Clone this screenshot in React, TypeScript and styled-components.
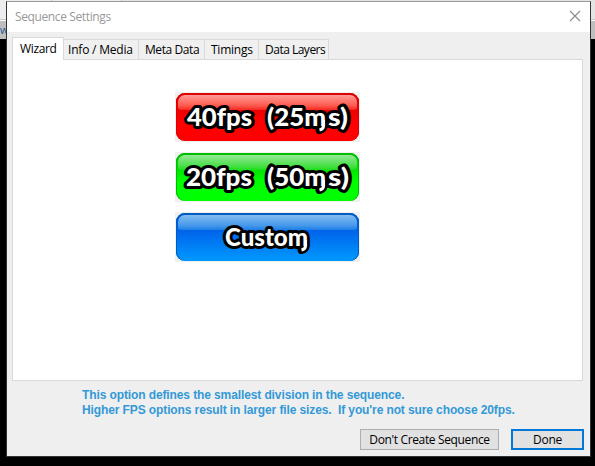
import React from "react";
import styled, { createGlobalStyle } from "styled-components";

const PageStyle = createGlobalStyle`
  *, *::before, *::after { box-sizing: border-box; }
  html, body, #root { height: 100%; margin: 0; }
  body { background: #000; overflow: hidden; }
`;

const uiFont = `"Open Sans", "Noto Sans", sans-serif`;

const Desktop = styled.div`
  display: grid;
  width: 595px;
  height: 466px;
  overflow: hidden;
  background: #000;
`;

const Backdrop = styled.div`
  grid-area: 1 / 1;
  height: 39px;
  display: flex;
  flex-direction: column;
  background: #c4c4c4;
`;

const BackdropTop = styled.div`
  display: flex;
  height: 20px;
  background: #e4e4e4;
  border-bottom: 1px solid #c8c8c8;
`;

const BackdropTab = styled.div<{ $width: number }>`
  width: ${(p) => p.$width}px;
  border-right: 1px solid #c6c6c6;
  background: #ededed;
`;

const BackdropRow = styled.div`
  flex: 1;
  font: 11px/17px ${uiFont};
  color: #1c5a8c;
  background: #bebebe;
  border-top: 1px solid #fafafa;
`;

const Dialog = styled.section`
  grid-area: 1 / 1;
  z-index: 1;
  margin: 1px 0 0 6px;
  width: 585px;
  height: 456px;
  display: flex;
  flex-direction: column;
  background: #efefef;
  border: 1px solid #333;
  border-top-color: #999;
  font-family: ${uiFont};
  font-size: 12px;
  color: #000;
`;

const TitleBar = styled.header`
  display: flex;
  justify-content: space-between;
  height: 30px;
  padding: 0 9px 0 8px;
  background: #fff;
  color: #999;
  line-height: 30px;
`;

const Close = styled.button`
  display: flex;
  align-items: center;
  padding: 0 0 2px;
  border: 0;
  background: none;
  color: #8b8b8b;
`;

const Tracked = styled.span<{ $spacing: number }>`
  letter-spacing: ${(p) => p.$spacing}px;
  white-space: pre;
`;

const TabStrip = styled.nav`
  display: flex;
  align-items: flex-end;
  height: 27px;
  padding-left: 5px;
`;

const Tab = styled.button<{ $width: number; $indent: number; $active?: boolean }>`
  width: ${(p) => p.$width}px;
  height: ${(p) => (p.$active ? 23 : 20)}px;
  padding: 0 0 0 ${(p) => p.$indent}px;
  border: 1px solid #d9d9d9;
  border-bottom: 0;
  border-left-width: ${(p) => (p.$active ? 1 : 0)}px;
  margin-bottom: ${(p) => (p.$active ? -1 : 0)}px;
  z-index: ${(p) => (p.$active ? 1 : 0)};
  background: ${(p) => (p.$active ? "#fff" : "#f0f0f0")};
  color: #000;
  font: inherit;
  line-height: ${(p) => (p.$active ? 18 : 19)}px;
  text-align: left;
  white-space: nowrap;
`;

const Panel = styled.main`
  width: 571px;
  height: 322px;
  margin-left: 5px;
  padding: 32px 0 0 162px;
  display: flex;
  flex-direction: column;
  gap: 10px;
  background: #fff;
  border: 1px solid #d9d9d9;
`;

type Tone = "red" | "green" | "blue";

const fills: Record<Tone, { rim: string; gloss: string; body: string }> = {
  red: {
    rim: "#dc0000",
    gloss: "linear-gradient(#ff9c94, #ff5a50 70%, #f5281f)",
    body: "linear-gradient(#e90000 30%, #ff0000 60%)",
  },
  green: {
    rim: "#00bd00",
    gloss: "linear-gradient(#96e996, #4be04b 70%, #1ddd1d)",
    body: "linear-gradient(#00d800 25%, #00ff00 60%)",
  },
  blue: {
    rim: "#005cc0",
    gloss: "linear-gradient(#82bdf0, #4698ea 70%, #1c7ee6)",
    body: "linear-gradient(#005ee8 30%, #0099ff)",
  },
};

const RateButton = styled.button`
  width: 185px;
  height: 50px;
  padding: 1px;
  border: 0;
  background: #f0f0f0;
`;

const RateFace = styled.span<{ $tone: Tone }>`
  display: grid;
  height: 48px;
  overflow: hidden;
  border-radius: 9px;
  background: ${(p) => fills[p.$tone].body};
  box-shadow: inset 0 2px 0 ${(p) => fills[p.$tone].rim}, inset 1px 0 0 ${(p) => fills[p.$tone].rim},
    inset -1px 0 0 ${(p) => fills[p.$tone].rim};

  &::before {
    content: "";
    grid-area: 1 / 1;
    height: 15px;
    margin: 2px 2px 0;
    border-radius: 7px 7px 3px 3px;
    background: ${(p) => fills[p.$tone].gloss};
  }
`;

const Lettering = styled.svg`
  grid-area: 1 / 1;
  z-index: 1;
  width: 183px;
  height: 48px;
  font: 900 24px Lato, sans-serif;

  text {
    fill: #fff;
    stroke: #000;
    stroke-width: 6px;
    stroke-linejoin: round;
    paint-order: stroke;
  }

  path {
    fill: none;
    stroke: #fff;
    stroke-width: 3px;
  }

  path.shade {
    stroke: #000;
    stroke-width: 8px;
    stroke-linecap: round;
  }
`;

interface Word {
  text: string;
  x: number;
  width: number;
}

interface RateProps {
  tone: Tone;
  words: Word[];
  tailX: number;
  baseline: number;
}

function Rate({ tone, words, tailX, baseline }: RateProps) {
  const tail = `M${tailX} ${baseline - 6}V${baseline}Q${tailX} ${baseline + 3} ${tailX - 4} ${baseline + 4}`;
  return (
    <RateButton>
      <RateFace $tone={tone}>
        <Lettering viewBox="0 0 183 48">
          <path className="shade" d={tail} />
          {words.map((w) => (
            <text key={w.text} x={w.x} y={baseline} textLength={w.width} lengthAdjust="spacingAndGlyphs">
              {w.text}
            </text>
          ))}
          <path d={tail} />
        </Lettering>
      </RateFace>
    </RateButton>
  );
}

const Hint = styled.p`
  height: 30px;
  margin: 7px 0 0 75px;
  font: bold 12px/15px "Liberation Sans", Arial, sans-serif;
  letter-spacing: -0.11px;
  color: #3399d8;
  white-space: pre;
`;

const Actions = styled.footer`
  display: flex;
  gap: 12px;
  margin: 11px 0 0 353px;
`;

const ActionButton = styled.button<{ $width: number; $primary?: boolean }>`
  width: ${(p) => p.$width}px;
  height: 21px;
  padding: 0;
  border: ${(p) => (p.$primary ? "2px solid #0078d7" : "1px solid #adadad")};
  background: #e1e1e1;
  color: #000;
  font: inherit;
  line-height: 17px;
  white-space: nowrap;
`;

const tabs = [
  { label: "Wizard", width: 52, indent: 7, spacing: -0.35, active: true },
  { label: "Info / Media", width: 75, indent: 4, spacing: -0.2 },
  { label: "Meta Data", width: 66, indent: 6, spacing: -0.42 },
  { label: "Timings", width: 54, indent: 6, spacing: -0.25 },
  { label: "Data Layers", width: 70, indent: 6, spacing: -0.5 },
];

export default function App() {
  return (
    <>
      <PageStyle />
      <Desktop>
        <Backdrop>
          <BackdropTop>
            <BackdropTab $width={52} />
            <BackdropTab $width={70} />
          </BackdropTop>
          <BackdropRow>w</BackdropRow>
        </Backdrop>
        <Dialog>
          <TitleBar>
            <Tracked $spacing={-0.38}>Sequence Settings</Tracked>
            <Close aria-label="Close">
              <svg width="12" height="12" viewBox="0 0 12 12" stroke="currentColor" strokeWidth="1.1">
                <path d="M1 1L11 11M11 1L1 11" />
              </svg>
            </Close>
          </TitleBar>
          <TabStrip>
            {tabs.map((t) => (
              <Tab key={t.label} $width={t.width} $indent={t.indent} $active={t.active}>
                <Tracked $spacing={t.spacing}>{t.label}</Tracked>
              </Tab>
            ))}
          </TabStrip>
          <Panel>
            <Rate
              tone="red"
              tailX={147.5}
              baseline={33}
              words={[
                { text: "s)", x: 152, width: 20 },
                { text: "40fps", x: 11, width: 65 },
                { text: "(25m", x: 91, width: 59 },
              ]}
            />
            <Rate
              tone="green"
              tailX={147.5}
              baseline={33}
              words={[
                { text: "s)", x: 152, width: 21 },
                { text: "20fps", x: 10, width: 66 },
                { text: "(50m", x: 91, width: 59 },
              ]}
            />
            <Rate tone="blue" tailX={129.5} baseline={33} words={[{ text: "Custom", x: 49, width: 83 }]} />
          </Panel>
          <Hint>
            {"This option defines the smallest division in the sequence.\nHigher FPS options result in larger file sizes.  If you're not sure choose 20fps."}
          </Hint>
          <Actions>
            <ActionButton $width={139}>
              <Tracked $spacing={-0.36}>Don't Create Sequence</Tracked>
            </ActionButton>
            <ActionButton $width={73} $primary>
              <Tracked $spacing={-0.2}>Done</Tracked>
            </ActionButton>
          </Actions>
        </Dialog>
      </Desktop>
    </>
  );
}
